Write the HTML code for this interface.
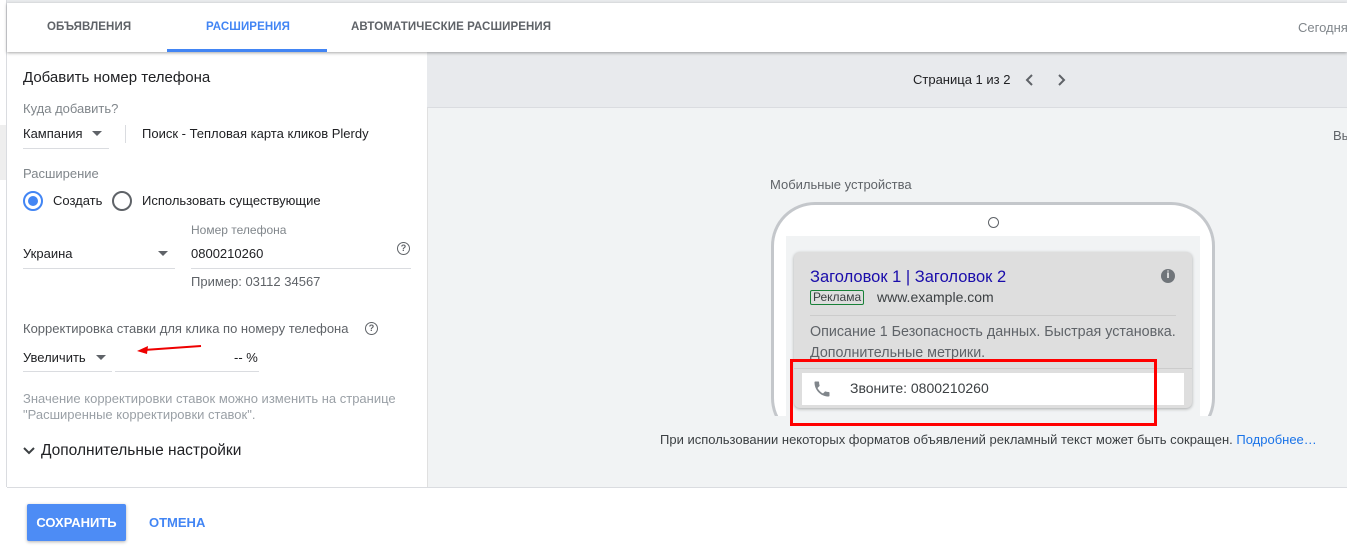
<!DOCTYPE html>
<html><head><meta charset="utf-8"><style>
*{box-sizing:border-box;margin:0;padding:0}
body{width:1347px;height:550px;overflow:hidden;position:relative;background:#fff;font-family:"Liberation Sans",Roboto,"Noto Sans CJK SC",sans-serif;color:#202124}
.a{position:absolute}
.lbl{color:#80868b;font-size:13px}
.t{font-size:13px;color:#202124}
.tri{width:0;height:0;border-left:5px solid transparent;border-right:5px solid transparent;border-top:5px solid #5f6368}
</style></head><body>
<div class="a" style="left:0;top:0;width:1347px;height:3px;background:#e8eaed"></div>
<div class="a" style="left:0;top:0;width:7px;height:487px;background:#fff;border-right:1px solid #dadce0"></div>
<div class="a" style="left:0;top:125px;width:6px;height:55px;background:#eee"></div>
<!-- header -->
<div class="a" style="left:7px;top:3px;width:1340px;height:49px;background:#fff;box-shadow:0 1px 3px rgba(0,0,0,.35);z-index:2">
<div class="a" style="left:40px;top:18px;font-size:11.5px;font-weight:bold;color:#5f6368;letter-spacing:.1px">ОБЪЯВЛЕНИЯ</div>
<div class="a" style="left:199px;top:18px;font-size:11.5px;font-weight:bold;color:#4285f4;letter-spacing:.1px">РАСШИРЕНИЯ</div>
<div class="a" style="left:160px;top:46px;width:160px;height:3px;background:#4285f4"></div>
<div class="a" style="left:344px;top:18px;font-size:11.5px;font-weight:bold;color:#5f6368;letter-spacing:.1px">АВТОМАТИЧЕСКИЕ РАСШИРЕНИЯ</div>
<div class="a" style="left:1291px;top:17px;font-size:13px;color:#80868b;white-space:nowrap">Сегодня</div>
</div>
<!-- right panel -->
<div class="a" style="left:427px;top:52px;width:920px;height:435px;background:#f1f3f4;border-left:1px solid #e0e0e0"></div>
<div class="a" style="left:427px;top:52px;width:920px;height:56px;background:#e8eaed;border-bottom:1px solid #dadce0"></div>
<div class="a t" style="left:913px;top:72px">Страница 1 из 2</div>
<svg class="a" style="left:1022px;top:72px" width="60" height="16"><path d="M10 3 L5 8 L10 13" stroke="#5f6368" stroke-width="2" fill="none"/><path d="M37 3 L42 8 L37 13" stroke="#5f6368" stroke-width="2" fill="none"/></svg>
<div class="a t" style="left:1333px;top:128px;color:#5f6368">Вы</div>
<div class="a" style="left:770px;top:177px;font-size:13px;color:#5f6368">Мобильные устройства</div>
<div class="a" style="left:771px;top:202px;width:444px;height:240px;border:3px solid #c4c7cb;border-radius:44px;background:#fff"></div>
<div class="a" style="left:988px;top:217px;width:11px;height:11px;border:1px solid #5f6368;border-radius:50%"></div>
<div class="a" style="left:786px;top:236px;width:414px;height:180px;background:#f1f3f4"></div>
<div class="a" style="top:416px;height:71px;background:#f1f3f4;left:428px;width:919px"></div>
<div class="a" style="left:794px;top:252px;width:398px;height:156px;background:#dedede;border-radius:6px;box-shadow:0 1px 3px rgba(0,0,0,.3)"></div>
<div class="a" style="left:810px;top:268px;font-size:16.5px;color:#1a0dab">Заголовок 1 | Заголовок 2</div>
<div class="a" style="left:1161px;top:269px;width:14px;height:14px;border-radius:50%;background:#70757a;color:#fff;font-size:10px;font-weight:bold;text-align:center;line-height:14px">i</div>
<div class="a" style="left:810px;top:290px;border:1px solid #188038;border-radius:2px;font-size:12px;color:#3c4043;padding:0 2px;line-height:13px">Реклама</div>
<div class="a" style="left:877px;top:289px;font-size:14px;color:#3c4043">www.example.com</div>
<div class="a" style="left:810px;top:315px;width:366px;height:1px;background:#ccc"></div>
<div class="a" style="left:810px;top:322px;font-size:14.3px;color:#5f6368;line-height:21px;width:390px">Описание 1 Безопасность данных. Быстрая установка. Дополнительные метрики.</div>
<div class="a" style="left:794px;top:368px;width:398px;height:1px;background:#ccc"></div>
<div class="a" style="left:802px;top:373px;width:382px;height:32px;background:#fff"></div>
<svg class="a" style="left:812px;top:379px" width="20" height="20" viewBox="0 0 24 24"><path fill="#80868b" d="M6.6 10.8c1.4 2.8 3.8 5.1 6.6 6.6l2.2-2.2c.3-.3.7-.4 1-.2 1.1.4 2.3.6 3.6.6.6 0 1 .4 1 1V20c0 .6-.4 1-1 1C10.6 21 3 13.4 3 4c0-.6.4-1 1-1h3.5c.6 0 1 .4 1 1 0 1.3.2 2.5.6 3.6.1.3 0 .7-.2 1z"/></svg>
<div class="a" style="left:850px;top:380px;font-size:14px;color:#3c4043">Звоните: 0800210260</div>
<div class="a" style="left:790px;top:359px;width:367px;height:67px;border:3px solid #f00"></div>
<div class="a" style="left:660px;top:432px;font-size:13px;color:#3c4043;white-space:nowrap">При использовании некоторых форматов объявлений рекламный текст может быть сокращен. <span style="color:#1a73e8">Подробнее…</span></div>
<!-- left form -->
<div class="a" style="left:23px;top:69px;font-size:15px;color:#202124">Добавить номер телефона</div>
<div class="a lbl" style="left:23px;top:101px">Куда добавить?</div>
<div class="a t" style="left:23px;top:126px">Кампания</div>
<div class="a tri" style="left:92px;top:131px"></div>
<div class="a" style="left:23px;top:148px;width:86px;height:1px;background:#dadce0"></div>
<div class="a" style="left:125px;top:125px;width:1px;height:18px;background:#dadce0"></div>
<div class="a t" style="left:142px;top:126px">Поиск - Тепловая карта кликов Plerdy</div>
<div class="a lbl" style="left:23px;top:166px">Расширение</div>
<div class="a" style="left:23px;top:191px;width:20px;height:20px;border:2px solid #4285f4;border-radius:50%"></div>
<div class="a" style="left:28px;top:196px;width:10px;height:10px;background:#4285f4;border-radius:50%"></div>
<div class="a t" style="left:53px;top:193px">Создать</div>
<div class="a" style="left:112px;top:191px;width:20px;height:20px;border:2px solid #5f6368;border-radius:50%"></div>
<div class="a t" style="left:142px;top:193px">Использовать существующие</div>
<div class="a" style="left:191px;top:223px;font-size:12px;color:#80868b">Номер телефона</div>
<div class="a t" style="left:23px;top:246px">Украина</div>
<div class="a tri" style="left:158px;top:251px"></div>
<div class="a" style="left:23px;top:268px;width:152px;height:1px;background:#dadce0"></div>
<div class="a t" style="left:191px;top:246px">0800210260</div>
<div class="a" style="left:397px;top:242px;width:13px;height:13px;border:1.5px solid #5f6368;border-radius:50%;font-size:9px;text-align:center;line-height:11px;color:#5f6368;font-weight:bold">?</div>
<div class="a" style="left:191px;top:268px;width:220px;height:1px;background:#dadce0"></div>
<div class="a" style="left:191px;top:274px;font-size:13px;color:#5f6368">Пример: 03112 34567</div>
<div class="a" style="left:23px;top:321px;font-size:13px;color:#5f6368">Корректировка ставки для клика по номеру телефона</div>
<div class="a" style="left:365px;top:322px;width:13px;height:13px;border:1.5px solid #5f6368;border-radius:50%;font-size:9px;text-align:center;line-height:11px;color:#5f6368;font-weight:bold">?</div>
<div class="a t" style="left:23px;top:350px">Увеличить</div>
<div class="a tri" style="left:96px;top:355px"></div>
<div class="a" style="left:23px;top:371px;width:89px;height:1px;background:#dadce0"></div>
<div class="a" style="left:115px;top:371px;width:144px;height:1px;background:#dadce0"></div>
<div class="a t" style="left:234px;top:350px">-- %</div>
<svg class="a" style="left:134px;top:342px" width="70" height="14"><path d="M67 4 L10 8" stroke="#e00" stroke-width="2"/><path d="M3 9 L14 4 L13 12 Z" fill="#e00"/></svg>
<div class="a" style="left:23px;top:391px;font-size:13px;color:#9aa0a6;line-height:16px;width:400px">Значение корректировки ставок можно изменить на странице "Расширенные корректировки ставок".</div>
<svg class="a" style="left:23px;top:446px" width="12" height="10"><path d="M1 2 L6 7 L11 2" stroke="#3c4043" stroke-width="2" fill="none"/></svg>
<div class="a" style="left:41px;top:442px;font-size:15.5px;color:#202124">Дополнительные настройки</div>
<!-- footer -->
<div class="a" style="left:7px;top:487px;width:1340px;height:63px;background:#fff;border-top:1px solid #dadce0"></div>
<div class="a" style="left:27px;top:504px;width:99px;height:37px;background:#4d8cf5;border-radius:2px;box-shadow:0 1px 3px rgba(0,0,0,.3);color:#fff;font-size:13px;font-weight:bold;text-align:center;line-height:37px">СОХРАНИТЬ</div>
<div class="a" style="left:149px;top:515px;font-size:13px;font-weight:bold;color:#4285f4">ОТМЕНА</div>
</body></html>
